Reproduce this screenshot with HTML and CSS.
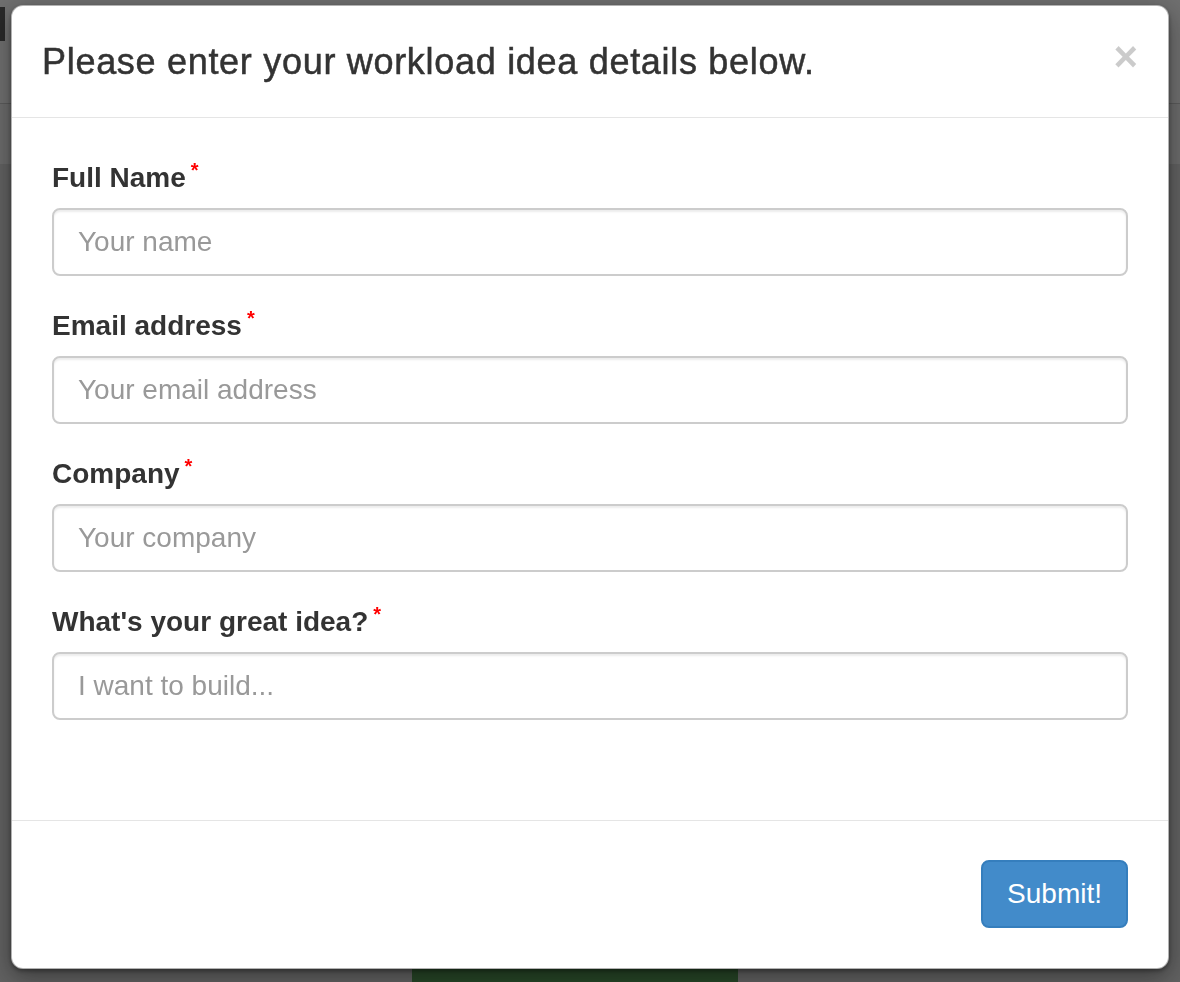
FILE: index.html
```html
<!DOCTYPE html>
<html lang="en">
<head>
<meta charset="utf-8">
<title>Workload idea</title>
<link rel="stylesheet" href="styles.css">
</head>
<body>
<div class="page">
  <div class="topbar"><div class="brand-block"></div></div>
  <div class="subbar"></div>
  <div class="page-main"><div class="cta-block"></div></div>
</div>
<div class="backdrop"></div>
<div class="modal">
  <div class="modal-content">
    <div class="modal-header">
      <h4 class="modal-title">Please enter your workload idea details below.</h4>
      <button class="close" type="button" aria-label="Close">&times;</button>
    </div>
    <form class="modal-body">
      <div class="form-group">
        <label class="label">Full Name<span class="req">*</span></label>
        <input class="form-control" type="text" placeholder="Your name">
      </div>
      <div class="form-group">
        <label class="label">Email address<span class="req">*</span></label>
        <input class="form-control" type="email" placeholder="Your email address">
      </div>
      <div class="form-group">
        <label class="label">Company<span class="req">*</span></label>
        <input class="form-control" type="text" placeholder="Your company">
      </div>
      <div class="form-group">
        <label class="label">What's your great idea?<span class="req">*</span></label>
        <input class="form-control" type="text" placeholder="I want to build...">
      </div>
    </form>
    <div class="modal-footer">
      <button class="btn-primary" type="button">Submit!</button>
    </div>
  </div>
</div>
</body>
</html>
```
FILE: styles.css
```css
* { box-sizing: border-box; }
html, body { margin: 0; padding: 0; height: 100%; overflow: hidden; }
body {
  font-family: "Liberation Sans", Arial, Helvetica, sans-serif;
  color: #333;
  background: #ffffff;
}
.page { display: flex; flex-direction: column; height: 100%; overflow: hidden; }
.topbar {
  flex: 0 0 104px;
  background: #f4f4f4;
  border-bottom: 1px solid #c8c8c8;
  padding-top: 7px;
}
.brand-block { width: 5px; height: 34px; background: #5a5a5a; }
.subbar { flex: 0 0 60px; background: #ececec; }
.page-main {
  flex: 1 0 auto;
  background: #d6d6d6;
  display: flex;
  justify-content: flex-start;
  padding-left: 412px;
  padding-top: 804px;
}
.cta-block { width: 326px; height: 40px; background: #559a55; }
.backdrop {
  position: fixed; inset: 0;
  background: rgba(0,0,0,0.55);
}
.modal {
  position: fixed;
  left: 11px; top: 5px;
  width: 1158px;
}
.modal-content {
  background: #fff;
  border: 1px solid rgba(0,0,0,0.3);
  border-radius: 12px;
  box-shadow: 0 2px 4px rgba(0,0,0,0.35), 0 8px 24px rgba(0,0,0,0.4);
  overflow: hidden;
}
.modal-header {
  display: flex;
  justify-content: space-between;
  align-items: flex-start;
  padding: 31px 30px 30px 30px;
  border-bottom: 1px solid #e5e5e5;
}
.modal-title {
  margin: 0;
  font-size: 36px;
  line-height: 50px;
  font-weight: 400;
  letter-spacing: 0.7px;
  -webkit-text-stroke: 0.5px #333;
  color: #333;
}
.close {
  border: 0; background: transparent; padding: 0;
  font-family: "Liberation Sans", Arial, sans-serif;
  font-size: 42px;
  font-weight: bold;
  line-height: 1;
  color: #000;
  opacity: 0.2;
  margin-top: -1px;
  cursor: pointer;
}
.modal-body {
  display: flex;
  flex-direction: column;
  gap: 30px;
  padding: 40px 40px 100px 40px;
  margin: 0;
}
.form-group { display: flex; flex-direction: column; align-items: flex-start; }
.label {
  font-size: 28px;
  line-height: 40px;
  font-weight: bold;
  color: #333;
  margin-bottom: 10px;
}
.req {
  color: #f00;
  font-size: 20px;
  line-height: 0;
  vertical-align: 10px;
  margin-left: 5px;
}
.form-control {
  width: 100%;
  height: 68px;
  padding: 12px 24px;
  font-family: "Liberation Sans", Arial, sans-serif;
  font-size: 28px;
  line-height: 40px;
  color: #555;
  background: #fff;
  border: 2px solid #ccc;
  border-radius: 8px;
  box-shadow: inset 0 2px 2px rgba(0,0,0,0.075);
  outline: none;
}
.form-control::placeholder { color: #999; }
.modal-footer {
  display: flex;
  justify-content: flex-end;
  padding: 39px 40px 40px 40px;
  border-top: 1px solid #e5e5e5;
}
.btn-primary {
  height: 68px;
  padding: 12px 24px;
  font-family: "Liberation Sans", Arial, sans-serif;
  font-size: 28px;
  line-height: 40px;
  color: #fff;
  background: #428bca;
  border: 2px solid #357ebd;
  border-radius: 8px;
  cursor: pointer;
}
```
